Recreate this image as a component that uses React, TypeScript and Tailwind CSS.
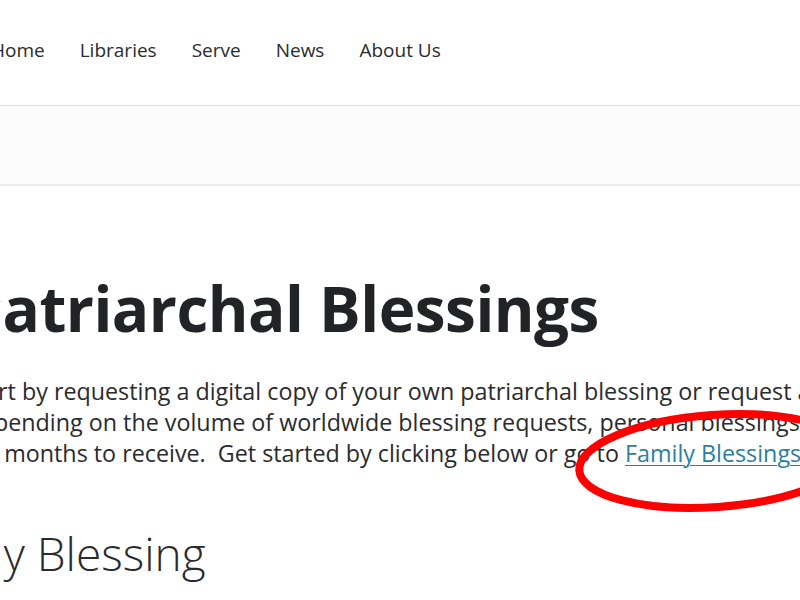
import React from 'react';

const navItems = ['Home', 'Libraries', 'Serve', 'News', 'About Us'];

export default function App() {
  return (
    <div
      className="relative h-[600px] w-[800px] overflow-hidden bg-white text-[#222326]"
      style={{ fontFamily: '"Open Sans", "Noto Sans", sans-serif' }}
    >
      {/* ── Top nav ── */}
      <header className="h-[106px] border-b border-[#dedede]">
        <nav className="flex -ml-[9px] gap-[35px] pt-[36px] text-[19px] leading-[28px] text-[#2a2b2e]">
          {navItems.map((item) => (
            <a key={item} className="whitespace-nowrap">
              {item}
            </a>
          ))}
        </nav>
      </header>

      {/* ── Sub band ── */}
      <div className="h-[80px] bg-[#fcfcfc] border-b-2 border-[#ececec]" />

      {/* ── Content ── */}
      <main className="-ml-[36px] pt-[86px]">
        <h1 className="whitespace-nowrap text-[62px] font-bold leading-[72px] tracking-[-0.5px] text-[#222326]">
          Patriarchal Blessings
        </h1>

        <p className="mt-[32px] whitespace-nowrap text-[23.3px] leading-[31px] text-[#2a2b2e]">
          Start by requesting a digital copy of your own patriarchal blessing or request a copy of a family member&apos;s
          <br />
          Depending on the volume of worldwide blessing requests, personal blessings may take
          <br />
          2-3 months to receive.&nbsp; Get started by clicking below or go to{' '}
          <a className="text-[#2a7fa0] underline underline-offset-[3px] decoration-1">Family Blessings</a> to learn more.
        </p>

        <h2 className="mt-[56px] whitespace-nowrap text-[46px] font-light leading-[56px] text-[#2a2b2e]">
          My Blessing
        </h2>
      </main>

      {/* red marker circle drawn over the screenshot */}
      <svg
        className="pointer-events-none absolute left-0 top-0"
        width="800"
        height="600"
        viewBox="0 0 800 600"
      >
        <ellipse
          cx="715"
          cy="461"
          rx="136"
          ry="46"
          transform="rotate(-4 715 461)"
          fill="none"
          stroke="#ff0000"
          strokeWidth="8"
        />
      </svg>
    </div>
  );
}
